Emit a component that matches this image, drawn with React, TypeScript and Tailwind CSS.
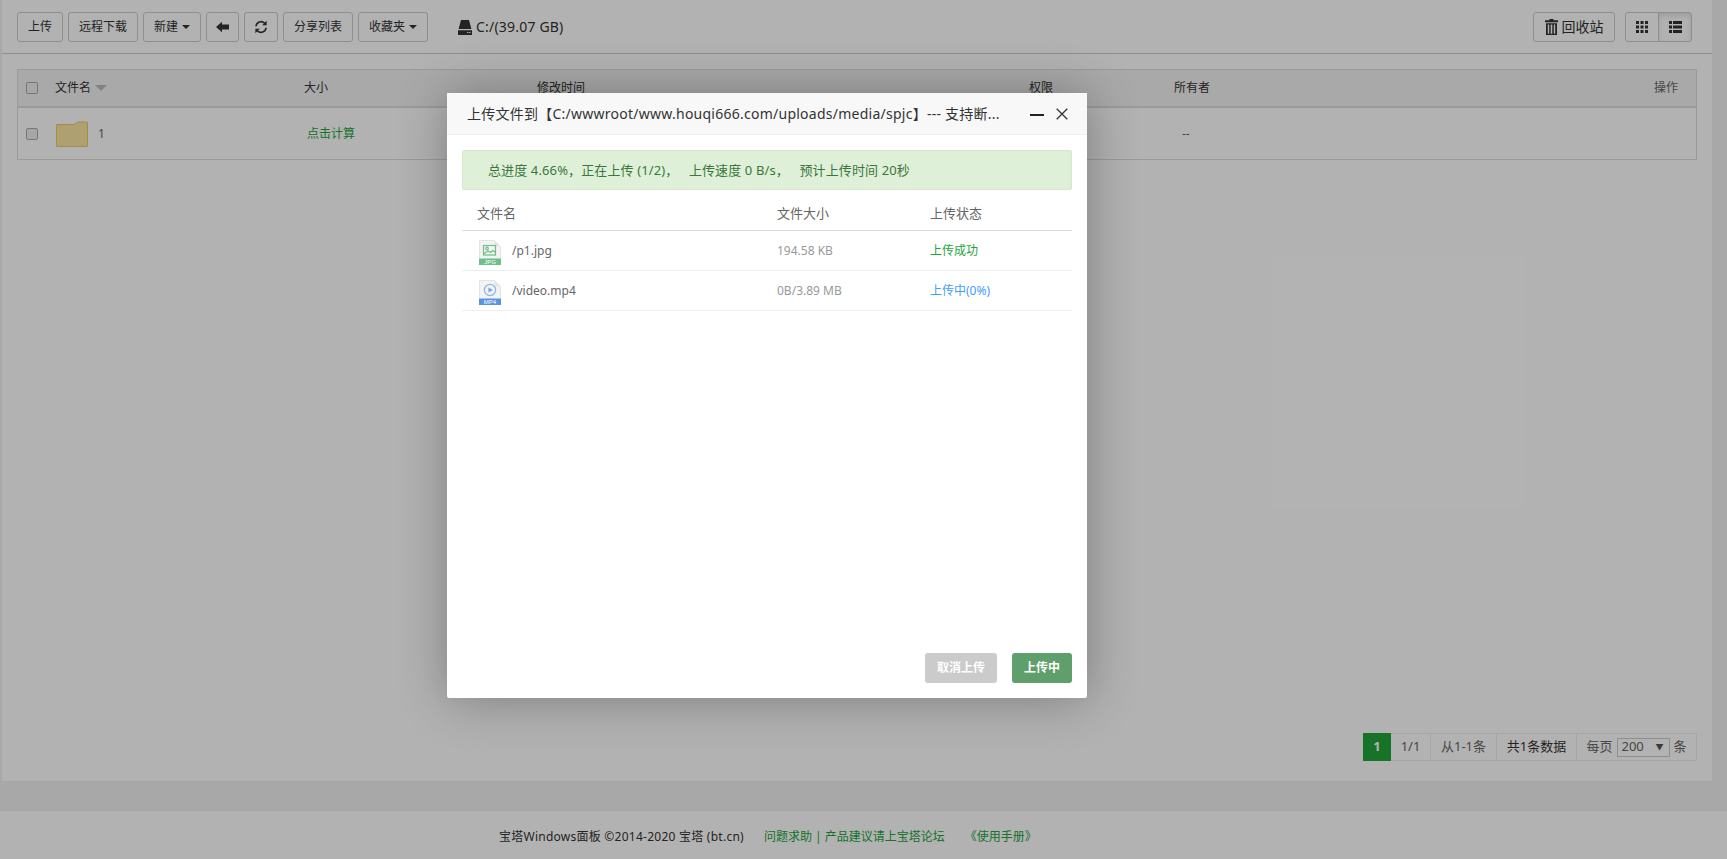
import { Fragment } from "react";

const font = "font-['Noto_Sans','Noto_Sans_CJK_SC',sans-serif]";

const ArrowIcon = () => (
  <svg width="13" height="12" viewBox="0 0 13 12" fill="currentColor">
    <path d="M0 6 6 .8V3.6h7v4.8H6v2.8z" />
  </svg>
);

const RefreshIcon = () => (
  <svg width="14" height="14" viewBox="0 0 14 14" fill="none" stroke="currentColor" strokeWidth="1.6">
    <path d="M2 6.3A5 5 0 0 1 10.6 3.2" />
    <path d="M12 7.7A5 5 0 0 1 3.4 10.8" />
    <path d="M12.6.8v4.4H8.2z" fill="currentColor" stroke="none" />
    <path d="M1.4 13.2V8.8h4.4z" fill="currentColor" stroke="none" />
  </svg>
);

const DiskIcon = () => (
  <svg width="14" height="15" viewBox="0 0 14 15" fill="currentColor">
    <path d="M3 0h8l2.4 9H.6z" />
    <path d="M0 10.2h14V15H0zM9 12v1h1.4v-1zm2.2 0v1h1.4v-1z" fillRule="evenodd" />
  </svg>
);

const TrashIcon = () => (
  <svg width="13" height="16" viewBox="0 0 13 16" fill="currentColor">
    <path d="M4.5 0h4v1.3H13v1.9H0V1.3h4.5z" />
    <path d="M1 4.2h11V16H1zm1.8 1.2v9.4h1.4V5.4zm2.9 0v9.4h1.6V5.4zm3.1 0v9.4h1.4V5.4z" fillRule="evenodd" />
  </svg>
);

const GridIcon = () => (
  <svg width="12" height="12" viewBox="0 0 12 12" fill="currentColor">
    {[0, 4.5, 9].map((y) =>
      [0, 4.5, 9].map((x) => <rect key={`${x}-${y}`} x={x} y={y} width="3" height="3" />),
    )}
  </svg>
);

const ListIcon = () => (
  <svg width="13" height="12" viewBox="0 0 13 12" fill="currentColor">
    {[0, 4.5, 9].map((y) => (
      <Fragment key={y}>
        <rect x="0" y={y} width="3" height="3" />
        <rect x="4" y={y} width="9" height="3" />
      </Fragment>
    ))}
  </svg>
);

const Caret = () => (
  <span className="ml-1 inline-block h-0 w-0 border-x-4 border-t-4 border-x-transparent border-t-[#333] align-middle" />
);

const FileIcon = ({ kind }: { kind: "jpg" | "mp4" }) => {
  const color = kind === "jpg" ? "#6cc08a" : "#5b93e0";
  return (
    <svg className="mt-[2px]" width="22" height="25" viewBox="0 0 22 25">
      <path d="M.5.5h15l6 6v18H.5z" fill="#f3f3f3" stroke="#e4e4e4" />
      <path d="M15.5.5v6h6" fill="#e6e6e6" />
      {kind === "jpg" ? (
        <g fill="none" stroke={color} strokeWidth="1.2">
          <rect x="4.5" y="5.5" width="12" height="9.5" />
          <circle cx="8" cy="8.5" r="1.3" />
          <path d="M4.5 14 9 11l2.5 1.5L14 10.5l2.5 2" />
        </g>
      ) : (
        <g>
          <circle cx="11" cy="10" r="5.6" fill="none" stroke="#8fb6ec" strokeWidth="1.2" />
          <path d="M9.4 7.4 14 10l-4.6 2.6z" fill="#7aa7e6" />
        </g>
      )}
      <rect x="0" y="18.5" width="22" height="6.5" fill={color} />
      <text x="11" y="24" textAnchor="middle" fontSize="6" fill="#fff" fontFamily="Liberation Sans, sans-serif">
        {kind === "jpg" ? "JPG" : "MP4"}
      </text>
    </svg>
  );
};

const toolBtn =
  "flex h-[30px] items-center justify-center rounded-[3px] border border-[#ccc] bg-white text-[#333]";

const Toolbar = () => (
  <div className="flex h-[54px] shrink-0 items-start border-b border-[#ccc] pl-[15px] pr-[20px] pt-[12px]">
    <div className="flex items-center gap-[5px] text-xs">
      <button className={`${toolBtn} w-[46px]`}>上传</button>
      <button className={`${toolBtn} w-[70px]`}>远程下载</button>
      <button className={`${toolBtn} w-[58px]`}>
        新建
        <Caret />
      </button>
      <button className={`${toolBtn} w-[33px]`}>
        <ArrowIcon />
      </button>
      <button className={`${toolBtn} w-[34px]`}>
        <RefreshIcon />
      </button>
      <button className={`${toolBtn} w-[70px]`}>分享列表</button>
      <button className={`${toolBtn} w-[70px]`}>
        收藏夹
        <Caret />
      </button>
      <div className="ml-[25px] flex items-center gap-[4px] text-sm tracking-[0.2px] text-[#333]">
        <DiskIcon />
        <span>C:/(39.07 GB)</span>
      </div>
    </div>
    <div className="ml-auto flex items-center">
      <button className={`${toolBtn} w-[82px] gap-1 text-sm`}>
        <TrashIcon />
        回收站
      </button>
      <div className="ml-[10px] flex">
        <button className={`${toolBtn} w-[34px] rounded-r-none`}>
          <GridIcon />
        </button>
        <button className={`${toolBtn} -ml-px w-[34px] rounded-l-none border-[#adadad] bg-[#e6e6e6] shadow-[inset_0_3px_5px_rgba(0,0,0,0.125)]`}>
          <ListIcon />
        </button>
      </div>
    </div>
  </div>
);

const Checkbox = () => (
  <span className="block h-3 w-3 rounded-[2px] border border-[#aaa] bg-[#eee]" />
);

const FileTable = () => (
  <div className="mx-[15px] mt-[15px] border border-[#ddd] text-xs text-[#333]">
    <div className="grid h-[38px] grid-cols-[37px_249px_233px_492px_145px_1fr_auto] items-center border-b-2 border-[#ddd] bg-[#f2f2f2]">
      <div className="pl-[8px]">
        <Checkbox />
      </div>
      <div className="flex items-center gap-1">
        文件名
        <span className="h-0 w-0 border-x-[6px] border-t-[6px] border-x-transparent border-t-[#bbb]" />
      </div>
      <div>大小</div>
      <div>修改时间</div>
      <div>权限</div>
      <div>所有者</div>
      <div className="pr-[18px] text-[#666]">操作</div>
    </div>
    <div className="grid h-[51px] grid-cols-[37px_252px_229px_492px_154px_1fr] items-center">
      <div className="pl-[8px]">
        <Checkbox />
      </div>
      <div className="flex items-center gap-[10px] pl-px">
        <svg width="32" height="26" viewBox="0 0 32 26">
          <path d="M1 3.5h17L22 1h8.5a1 1 0 0 1 1 1v23a.6.6 0 0 1-.6.6H1a.6.6 0 0 1-.6-.6V4a.6.6 0 0 1 .6-.5z" fill="#fae6a3" stroke="#ecc667" />
        </svg>
        <span className="text-[#666]">1</span>
      </div>
      <div className="text-[#20a53a]">点击计算</div>
      <div />
      <div />
      <div className="text-[#666]">--</div>
    </div>
  </div>
);

const Pagination = () => {
  const cell = "flex h-full items-center justify-center border-y border-r border-[#eee]";
  return (
    <div className="flex h-[28px] text-[13px] text-[#666]">
      <div className="flex w-[28px] items-center justify-center bg-[#20a53a] font-bold text-white">1</div>
      <div className={`${cell} w-[40px]`}>1/1</div>
      <div className={`${cell} w-[66px]`}>从1-1条</div>
      <div className={`${cell} w-[80px] text-[#333]`}>共1条数据</div>
      <div className={`${cell} w-[120px] gap-[4px]`}>
        每页
        <span className="flex h-[19px] w-[53px] items-center justify-between border border-[#ccc] pl-[4px] pr-[5px]">
          200
          <span className="text-[8px] text-[#555]">▼</span>
        </span>
        条
      </div>
    </div>
  );
};

const UploadDialog = () => (
  <div className="absolute left-[447px] top-[93px] z-20 flex h-[605px] w-[640px] flex-col rounded-[2px] bg-white shadow-[1px_1px_50px_rgba(0,0,0,0.3)]">
    <div className="flex h-[42px] items-center border-b border-[#eee] bg-[#f8f8f8] pl-[20px] pr-[19px] pt-px text-sm text-[#333]">
      <span className="tracking-[0.25px]">上传文件到【C:/wwwroot/www.houqi666.com/uploads/media/spjc】--- 支持断...</span>
      <div className="ml-auto flex items-center gap-[12px]">
        <span className="h-[2px] w-[14px] translate-y-[1px] bg-[#222]" />
        <svg width="12" height="12" viewBox="0 0 12 12" stroke="#333" strokeWidth="1.3">
          <path d="M.7.7l10.6 10.6M11.3.7.7 11.3" />
        </svg>
      </div>
    </div>
    <div className="flex flex-1 flex-col p-[15px]">
      <div className="flex h-[40px] items-center rounded-[2px] border border-[#d6e9c6] bg-[#dff0d8] pl-[25px] pt-[2px] text-[13px] tracking-[0.12px] text-[#3c763d] whitespace-pre">
        总进度 4.66%，正在上传 (1/2)，   上传速度 0 B/s，   预计上传时间 20秒
      </div>
      <div className="text-xs">
        <div className="grid h-[41px] grid-cols-[300px_153px_1fr] items-center border-b border-[#ddd] pl-[15px] pt-[7px] text-[13px] text-[#666]">
          <div>文件名</div>
          <div>文件大小</div>
          <div>上传状态</div>
        </div>
        <div className="grid h-[40px] grid-cols-[298px_153px_1fr] items-center border-b border-[#eee] pl-[17px] pt-px">
          <div className="flex items-center gap-[11px] text-[#666]">
            <FileIcon kind="jpg" />
            /p1.jpg
          </div>
          <div className="text-[#999]">194.58 KB</div>
          <div className="text-[#20a53a]">上传成功</div>
        </div>
        <div className="grid h-[40px] grid-cols-[298px_153px_1fr] items-center border-b border-[#eee] pl-[17px] pt-px">
          <div className="flex items-center gap-[11px] text-[#666]">
            <FileIcon kind="mp4" />
            /video.mp4
          </div>
          <div className="text-[#999]">0B/3.89 MB</div>
          <div className="text-[#409eff]">上传中(0%)</div>
        </div>
      </div>
      <div className="mt-auto flex justify-end gap-[15px]">
        <button className="h-[30px] w-[72px] rounded-[3px] bg-[#cbcbcb] text-xs font-bold text-white">取消上传</button>
        <button className="h-[30px] w-[60px] rounded-[3px] bg-[#5f9f6b] text-xs font-bold text-white">上传中</button>
      </div>
    </div>
  </div>
);

export default function App() {
  return (
    <div className={`${font} relative flex h-[859px] w-[1727px] flex-col overflow-hidden bg-[#f1f1f1]`}>
      <div className="ml-[2px] flex h-[781px] w-[1710px] flex-col bg-white">
        <Toolbar />
        <FileTable />
        <div className="mr-[15px] mt-auto mb-[20px] flex justify-end">
          <Pagination />
        </div>
      </div>
      <div className="mt-[30px] flex h-[48px] items-center bg-white pl-[499px] pt-[3px] text-xs">
        <span className="tracking-[0.25px] text-[#333]">宝塔Windows面板 ©2014-2020 宝塔 (bt.cn)</span>
        <span className="ml-[20px] text-[#20a53a]">问题求助 | 产品建议请上宝塔论坛</span>
        <span className="ml-[20px] text-[#20a53a]">《使用手册》</span>
      </div>
      <div className="absolute inset-0 z-10 bg-black/30" />
      <UploadDialog />
    </div>
  );
}
